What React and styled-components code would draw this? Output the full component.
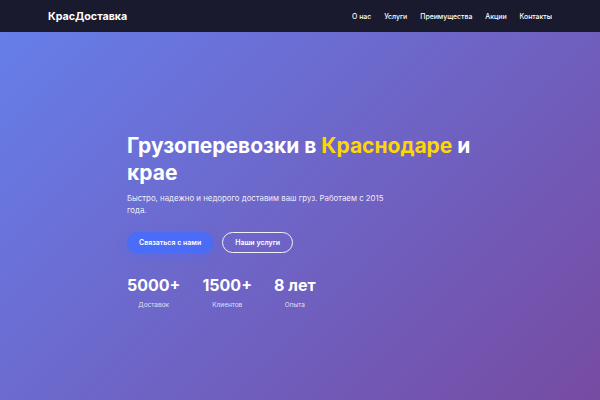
import React from "react";
import styled, { createGlobalStyle } from "styled-components";

const Global = createGlobalStyle`
  * { box-sizing: border-box; }
  html, body { margin: 0; padding: 0; }
  body { font-family: Inter, "Noto Sans", sans-serif; color: #fff; background: #1a1a2e; }
`;

const Page = styled.div`
  display: flex;
  flex-direction: column;
  min-height: 400px;
`;

const Header = styled.header`
  height: 32px;
  background: #1a1a2e;
  display: flex;
  align-items: center;
  justify-content: space-between;
  padding: 0 48px;
`;

const Logo = styled.div`
  font-size: 10.7px;
  font-weight: 700;
  color: #fff;
`;

const Nav = styled.nav`
  display: flex;
  gap: 13px;
`;

const NavLink = styled.a`
  font-size: 6.9px;
  font-weight: 500;
  color: #fff;
  text-decoration: none;
`;

const Hero = styled.section`
  flex: 1;
  height: 368px;
  background: linear-gradient(135deg, #667eea 0%, #764ba2 100%);
  display: flex;
  align-items: center;
  justify-content: center;
`;

const Content = styled.div`
  width: 346px;
  margin-top: 9px;
`;

const Title = styled.h1`
  margin: 0 0 6px;
  font-size: 21px;
  line-height: 27px;
  font-weight: 700;
  color: #fff;
`;

const Accent = styled.span`
  color: #ffd700;
`;

const Subtitle = styled.p`
  margin: 0 0 16px;
  max-width: 266px;
  font-size: 7.85px;
  line-height: 12px;
  color: rgba(255, 255, 255, 0.92);
`;

const Buttons = styled.div`
  display: flex;
  gap: 9px;
  margin-bottom: 22px;
`;

const Button = styled.a`
  display: inline-flex;
  align-items: center;
  justify-content: center;
  height: 21px;
  padding: 0 ${(p) => (p.$outline ? "12px" : "11px")};
  border-radius: 999px;
  font-size: 7px;
  font-weight: 600;
  color: #fff;
  text-decoration: none;
  background: ${(p) => (p.$outline ? "transparent" : "#4a6cf7")};
  border: 1px solid ${(p) => (p.$outline ? "rgba(255,255,255,0.9)" : "#4a6cf7")};
  box-shadow: ${(p) => (p.$outline ? "none" : "0 3px 10px rgba(74, 108, 247, 0.45)")};
`;

const Stats = styled.div`
  display: flex;
  gap: 22px;
`;

const Stat = styled.div`
  display: flex;
  flex-direction: column;
  align-items: center;
`;

const Number = styled.div`
  font-size: 16px;
  line-height: 20px;
  font-weight: 700;
  color: #fff;
`;

const Label = styled.div`
  margin-top: 6px;
  font-size: 6.5px;
  line-height: 9px;
  color: rgba(255, 255, 255, 0.8);
`;

const navItems = ["О нас", "Услуги", "Преимущества", "Акции", "Контакты"];
const stats = [
  ["5000+", "Доставок"],
  ["1500+", "Клиентов"],
  ["8 лет", "Опыта"],
];

export default function App() {
  return (
    <Page>
      <Global />
      <Header>
        <Logo>КрасДоставка</Logo>
        <Nav>
          {navItems.map((n) => (
            <NavLink key={n} href="#">{n}</NavLink>
          ))}
        </Nav>
      </Header>
      <Hero>
        <Content>
          <Title>
            Грузоперевозки в <Accent>Краснодаре</Accent> и крае
          </Title>
          <Subtitle>
            Быстро, надежно и недорого доставим ваш груз. Работаем с 2015 года.
          </Subtitle>
          <Buttons>
            <Button href="#">Связаться с нами</Button>
            <Button href="#" $outline>Наши услуги</Button>
          </Buttons>
          <Stats>
            {stats.map(([n, l]) => (
              <Stat key={l}>
                <Number>{n}</Number>
                <Label>{l}</Label>
              </Stat>
            ))}
          </Stats>
        </Content>
      </Hero>
    </Page>
  );
}
